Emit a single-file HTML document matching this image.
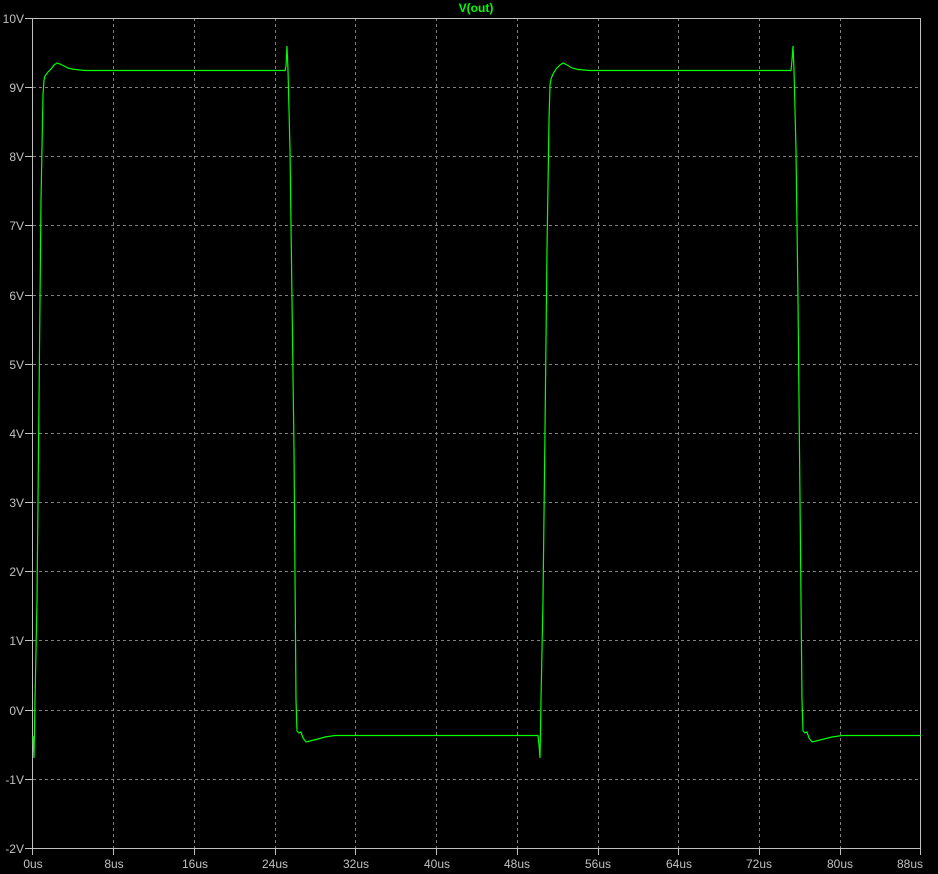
<!DOCTYPE html><html><head><style>body{margin:0;background:#000;width:938px;height:874px;overflow:hidden}svg{display:block}text{font-family:"Liberation Sans",sans-serif;font-size:12px;fill:#c0c0c0}</style></head><body>
<svg width="938" height="874" xmlns="http://www.w3.org/2000/svg">
<g stroke="#808080" stroke-dasharray="3,3" stroke-width="1">
<path d="M33 87.5H921M33 156.5H921M33 225.5H921M33 295.5H921M33 364.5H921M33 433.5H921M33 502.5H921M33 571.5H921M33 640.5H921M33 710.5H921M33 779.5H921"/>
<path d="M113.5 18V848M194.5 18V848M275.5 18V848M355.5 18V848M436.5 18V848M517.5 18V848M598.5 18V848M678.5 18V848M759.5 18V848M840.5 18V848"/>
</g>
<g stroke="#c0c0c0" stroke-width="1" fill="none">
<rect x="32.5" y="18.5" width="888" height="830"/>
<path d="M25 18.5H33M25 87.5H33M25 156.5H33M25 225.5H33M25 295.5H33M25 364.5H33M25 433.5H33M25 502.5H33M25 571.5H33M25 640.5H33M25 710.5H33M25 779.5H33M25 848.5H33"/>
<path d="M32.5 848V855M113.5 848V855M194.5 848V855M275.5 848V855M355.5 848V855M436.5 848V855M517.5 848V855M598.5 848V855M678.5 848V855M759.5 848V855M840.5 848V855M920.5 848V855"/>
</g>
<g text-anchor="end">
<text x="24" y="23">10V</text><text x="24" y="92">9V</text><text x="24" y="161">8V</text><text x="24" y="230">7V</text><text x="24" y="300">6V</text><text x="24" y="369">5V</text><text x="24" y="438">4V</text><text x="24" y="507">3V</text><text x="24" y="576">2V</text><text x="24" y="645">1V</text><text x="24" y="715">0V</text><text x="24" y="784">-1V</text><text x="24" y="853">-2V</text>
</g>
<g text-anchor="middle">
<text x="33" y="868">0us</text><text x="114" y="868">8us</text><text x="195" y="868">16us</text><text x="275" y="868">24us</text><text x="356" y="868">32us</text><text x="437" y="868">40us</text><text x="517" y="868">48us</text><text x="598" y="868">56us</text><text x="679" y="868">64us</text><text x="759" y="868">72us</text><text x="840" y="868">80us</text><text x="910" y="868">88us</text>
</g>
<text x="476" y="12" text-anchor="middle" style="fill:#00ff00;font-weight:bold;font-size:12px">V(out)</text>
<path fill="none" stroke="#00ff00" stroke-width="1.2" d="M33 736L34 758L35 700L37 600L39 400L41 200L43 95L44 80L45 76L48 72L51 69L54 65L57 63L60 64L64 66L68 68L72 69L80 70L85 70.5L285 70.5L286 66L287 46L288 70L290 150L292 300L294 450L296 700L297 731L299 733L301 732L303 738L306 742L310 741L318 739L325 737L335 735.5L538 735.5L539 745L540 758L541 700L543 600L545 430L547 250L549 120L550 85L551 79L553 74L556 69L560 65L563 63L567 65L572 68L578 69.5L590 70.5L791 70.5L792 60L793 46L794 70L796 150L798 300L800 500L802 700L803 731L805 733L807 732L809 738L812 742L816 741L824 739L832 737L842 735.5L921 735.5"/>
</svg></body></html>
